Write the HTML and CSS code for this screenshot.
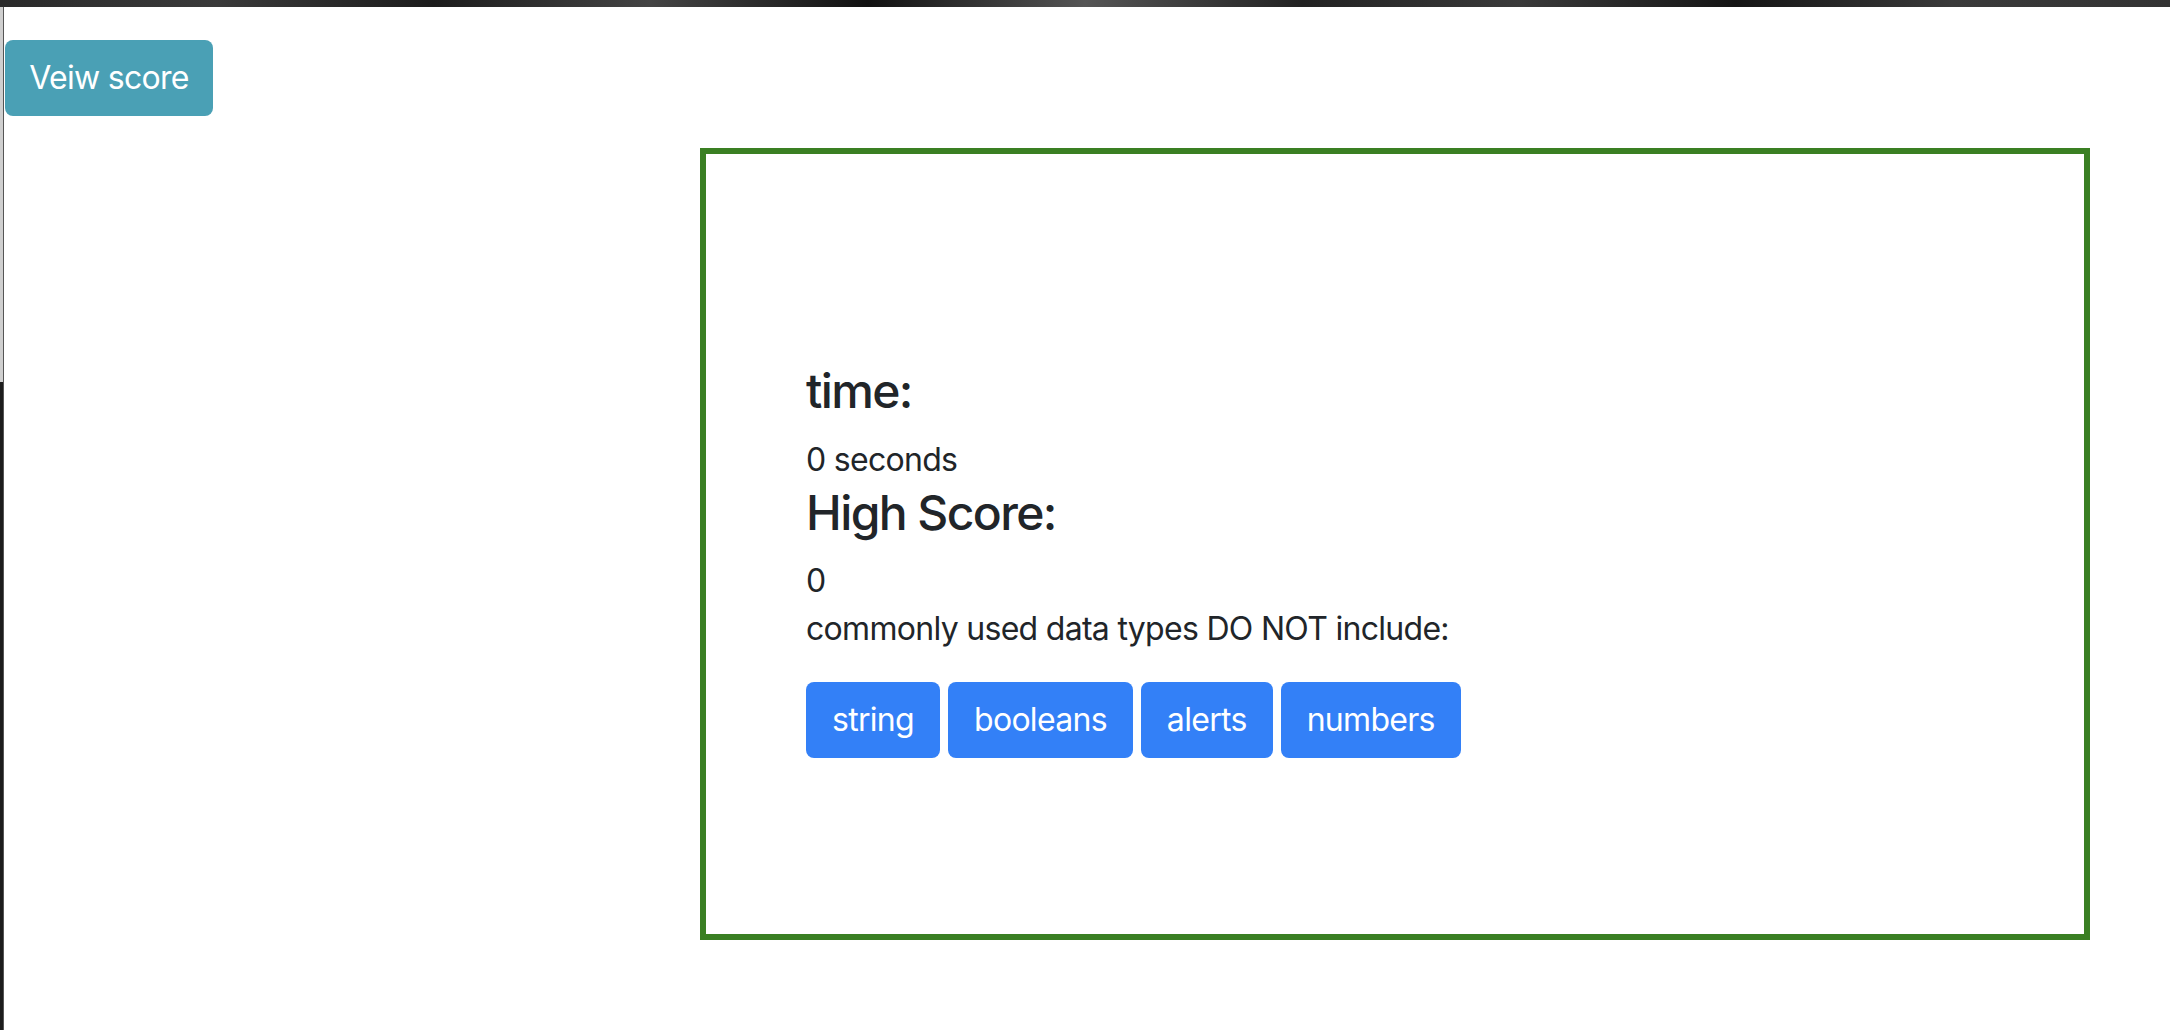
FILE: index.html
```html
<!DOCTYPE html>
<html lang="en">
<head>
<meta charset="utf-8">
<title>Quiz</title>
<link rel="stylesheet" href="styles.css">
</head>
<body>
<div class="topbar"></div>
<div class="frame">
  <div class="side"></div>
  <main class="page">
    <div class="header-row">
      <button class="btn btn-info">Veiw score</button>
    </div>
    <section class="quiz-box">
      <h4 class="label">time:</h4>
      <p class="value">0 seconds</p>
      <h4 class="label">High Score:</h4>
      <p class="value">0</p>
      <p class="question">commonly used data types DO NOT include:</p>
      <div class="answers">
        <button class="btn btn-primary">string</button>
        <button class="btn btn-primary">booleans</button>
        <button class="btn btn-primary">alerts</button>
        <button class="btn btn-primary">numbers</button>
      </div>
    </section>
  </main>
</div>
</body>
</html>
```
FILE: styles.css
```css
html, body {
  margin: 0;
  padding: 0;
  background: #fff;
}
body {
  font-family: Inter, "Noto Sans", "Liberation Sans", sans-serif;
  color: #212529;
  font-size: 32px;
  line-height: 48px;
  letter-spacing: -0.7px;
  width: 2170px;
  height: 1030px;
  overflow: hidden;
}
.topbar {
  height: 7px;
  background: linear-gradient(90deg, #2a2a2a 0%, #3a3a3a 10%, #1c1c1c 20%, #444 30%, #111 40%, #555 50%, #222 60%, #3a3a3a 70%, #151515 80%, #3a3a3a 90%, #333 100%);
}
.frame {
  display: flex;
  height: 1023px;
}
.side {
  width: 3px;
  background: linear-gradient(180deg, #cfcfcf 0, #cfcfcf 375px, #1c1c1c 375px, #1c1c1c 100%);
  border-right: 1px solid #555;
}
.page {
  flex: 1;
  display: flex;
  flex-direction: column;
}
.header-row {
  padding: 33px 0 0 1px;
  height: 108px;
  box-sizing: border-box;
}
.btn {
  font-family: inherit;
  font-size: 32px;
  line-height: 48px;
  letter-spacing: -0.7px;
  border: 0;
  border-radius: 8px;
  color: #fff;
  cursor: pointer;
}
.btn-info {
  background: #4aa0b5;
  width: 208px;
  height: 76px;
  padding: 0;
}
.btn-primary {
  background: #3380f7;
  height: 76px;
  padding: 0 26px;
}
.quiz-box {
  margin: 33px 0 0 696px;
  width: 1390px;
  box-sizing: border-box;
  border: 6px solid #3a7f23;
  padding: 208px 93px 176px 100px;
}
.label {
  margin: 0 0 16px;
  font-size: 48px;
  line-height: 57.6px;
  font-weight: 500;
  letter-spacing: -1.6px;
}
.value {
  margin: 0;
}
.question {
  margin: 0 0 29px;
}
.answers {
  display: flex;
  gap: 8px;
}
```
